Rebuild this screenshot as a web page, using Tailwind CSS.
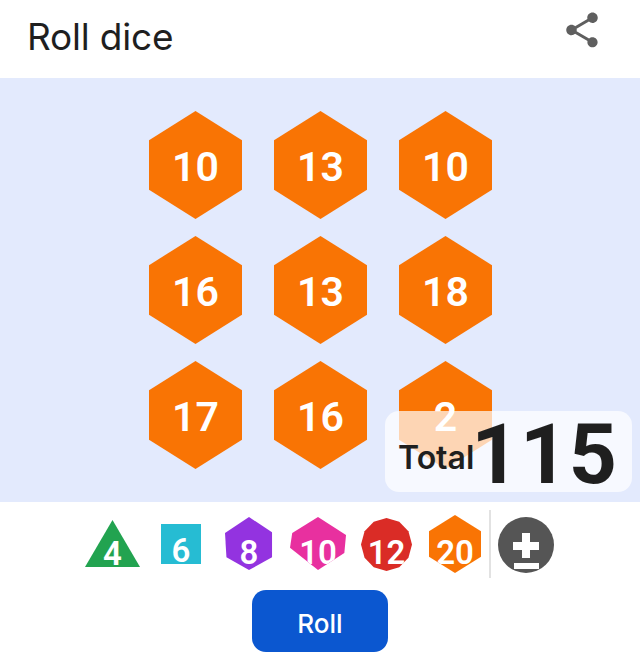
<!DOCTYPE html>
<html>
<head>
    <meta charset="utf-8" />
    <script src="https://cdn.jsdelivr.net/npm/@tailwindcss/browser@4"></script>
    <title>Roll dice</title>
</head>
<body class="bg-white font-['Roboto',sans-serif]">
    <div class="w-[640px] h-[670px] overflow-hidden">
        <!-- header -->
        <div class="h-[78px] flex justify-between pl-[27px] pr-[37px]">
            <h1 class="text-[37px] leading-[42px] mt-[16px] text-[#1f1f1f] font-['Inter',sans-serif] tracking-[-0.2px]">Roll dice</h1>
            <svg class="w-[42px] h-[42px] mt-[9px] text-[#5f5f5f]" viewBox="0 0 24 24" fill="currentColor">
                <path d="M18 16.08c-.76 0-1.44.3-1.96.77L8.91 12.7c.05-.23.09-.46.09-.7s-.04-.47-.09-.7l7.05-4.11c.54.5 1.25.81 2.04.81 1.66 0 3-1.34 3-3s-1.34-3-3-3-3 1.34-3 3c0 .24.04.47.09.7L8.04 9.81C7.5 9.31 6.79 9 6 9c-1.66 0-3 1.34-3 3s1.34 3 3 3c.79 0 1.5-.31 2.04-.81l7.12 4.16c-.05.21-.08.43-.08.65 0 1.61 1.31 2.92 2.92 2.92s2.92-1.31 2.92-2.92-1.31-2.92-2.92-2.92z" />
            </svg>
        </div>

        <!-- dice board -->
        <div class="relative h-[424px] bg-[#e3eafd] pt-[33px] pl-[149px]">
            <div class="grid grid-cols-[repeat(3,93px)] gap-x-[32px] gap-y-[17px] text-white text-[41px] font-semibold">
                <div class="h-[108px] pt-[5px] flex items-center justify-center bg-[#f97404] [clip-path:polygon(50%_0,100%_27%,100%_73%,50%_100%,0_73%,0_27%)]">10</div>
                <div class="h-[108px] pt-[5px] flex items-center justify-center bg-[#f97404] [clip-path:polygon(50%_0,100%_27%,100%_73%,50%_100%,0_73%,0_27%)]">13</div>
                <div class="h-[108px] pt-[5px] flex items-center justify-center bg-[#f97404] [clip-path:polygon(50%_0,100%_27%,100%_73%,50%_100%,0_73%,0_27%)]">10</div>
                <div class="h-[108px] pt-[5px] flex items-center justify-center bg-[#f97404] [clip-path:polygon(50%_0,100%_27%,100%_73%,50%_100%,0_73%,0_27%)]">16</div>
                <div class="h-[108px] pt-[5px] flex items-center justify-center bg-[#f97404] [clip-path:polygon(50%_0,100%_27%,100%_73%,50%_100%,0_73%,0_27%)]">13</div>
                <div class="h-[108px] pt-[5px] flex items-center justify-center bg-[#f97404] [clip-path:polygon(50%_0,100%_27%,100%_73%,50%_100%,0_73%,0_27%)]">18</div>
                <div class="h-[108px] pt-[5px] flex items-center justify-center bg-[#f97404] [clip-path:polygon(50%_0,100%_27%,100%_73%,50%_100%,0_73%,0_27%)]">17</div>
                <div class="h-[108px] pt-[5px] flex items-center justify-center bg-[#f97404] [clip-path:polygon(50%_0,100%_27%,100%_73%,50%_100%,0_73%,0_27%)]">16</div>
                <div class="h-[108px] pt-[5px] flex items-center justify-center bg-[#f97404] [clip-path:polygon(50%_0,100%_27%,100%_73%,50%_100%,0_73%,0_27%)]">2</div>
            </div>
            <!-- total overlay -->
            <div class="absolute left-[385px] top-[333px] w-[247px] h-[81px] rounded-[14px] bg-white/70 flex items-center pl-[13px] text-[#1f1f1f]">
                <span class="text-[32px] font-semibold font-['Inter',sans-serif] leading-none mt-[12px]">Total</span>
                <span class="text-[84px] font-bold leading-none mt-[7px] ml-[-3px] tracking-[0.5px]">115</span>
            </div>
        </div>

        <!-- die picker -->
        <div class="h-[88px] flex items-start pl-[85px] text-white text-[33px] font-semibold leading-[26px]">
            <div class="w-[55px] h-[47px] mt-[18px] flex items-end justify-center bg-[#22a350] [clip-path:polygon(50%_0,100%_100%,0_100%)]">4</div>
            <div class="w-[40px] h-[40px] mt-[22px] ml-[21px] flex items-end justify-center bg-[#26bcd3]">6</div>
            <div class="w-[48px] h-[53px] mt-[15px] ml-[24px] flex items-end justify-center pb-[4px] bg-[#9333e0] [clip-path:polygon(50%_0,98%_29%,98%_76%,50%_100%,3%_76%,0_30%)]">8</div>
            <div class="w-[56px] h-[53px] mt-[15px] ml-[17px] flex items-end justify-center pb-[4px] bg-[#e8309f] [clip-path:polygon(50%_0,100%_34%,97%_68%,50%_100%,0_58%,4%_30%)]">10</div>
            <div class="w-[51px] h-[53px] mt-[16px] ml-[15px] flex items-end justify-center pb-[5px] bg-[#da2c26] [clip-path:polygon(50%_0,75%_7%,93%_25%,100%_50%,93%_75%,75%_93%,50%_100%,25%_93%,7%_75%,0_50%,7%_25%,25%_7%)]">12</div>
            <div class="w-[52px] h-[58px] mt-[13px] ml-[17px] flex items-end justify-center pb-[7px] bg-[#f97404] [clip-path:polygon(50%_0,100%_28%,100%_72%,50%_100%,0_72%,0_28%)]">20</div>
            <div class="w-[2px] h-[68px] mt-[8px] ml-[8px] bg-[#e2e2e2]"></div>
            <div class="w-[56px] h-[56px] mt-[15px] ml-[7px] rounded-full bg-[#555555]">
                <svg class="w-[56px] h-[56px]" viewBox="0 0 56 56" fill="#ffffff">
                    <path d="M24 16h8v9h9v8h-9v8h-8v-8h-9v-8h9z" />
                    <rect x="16" y="46" width="25" height="6" />
                </svg>
            </div>
        </div>

        <!-- roll button -->
        <div class="flex justify-center">
            <button class="w-[136px] h-[62px] pt-[5px] rounded-[14px] bg-[#0b57d0] text-white text-[26px] font-medium font-['Inter',sans-serif]">Roll</button>
        </div>
    </div>
</body>
</html>
